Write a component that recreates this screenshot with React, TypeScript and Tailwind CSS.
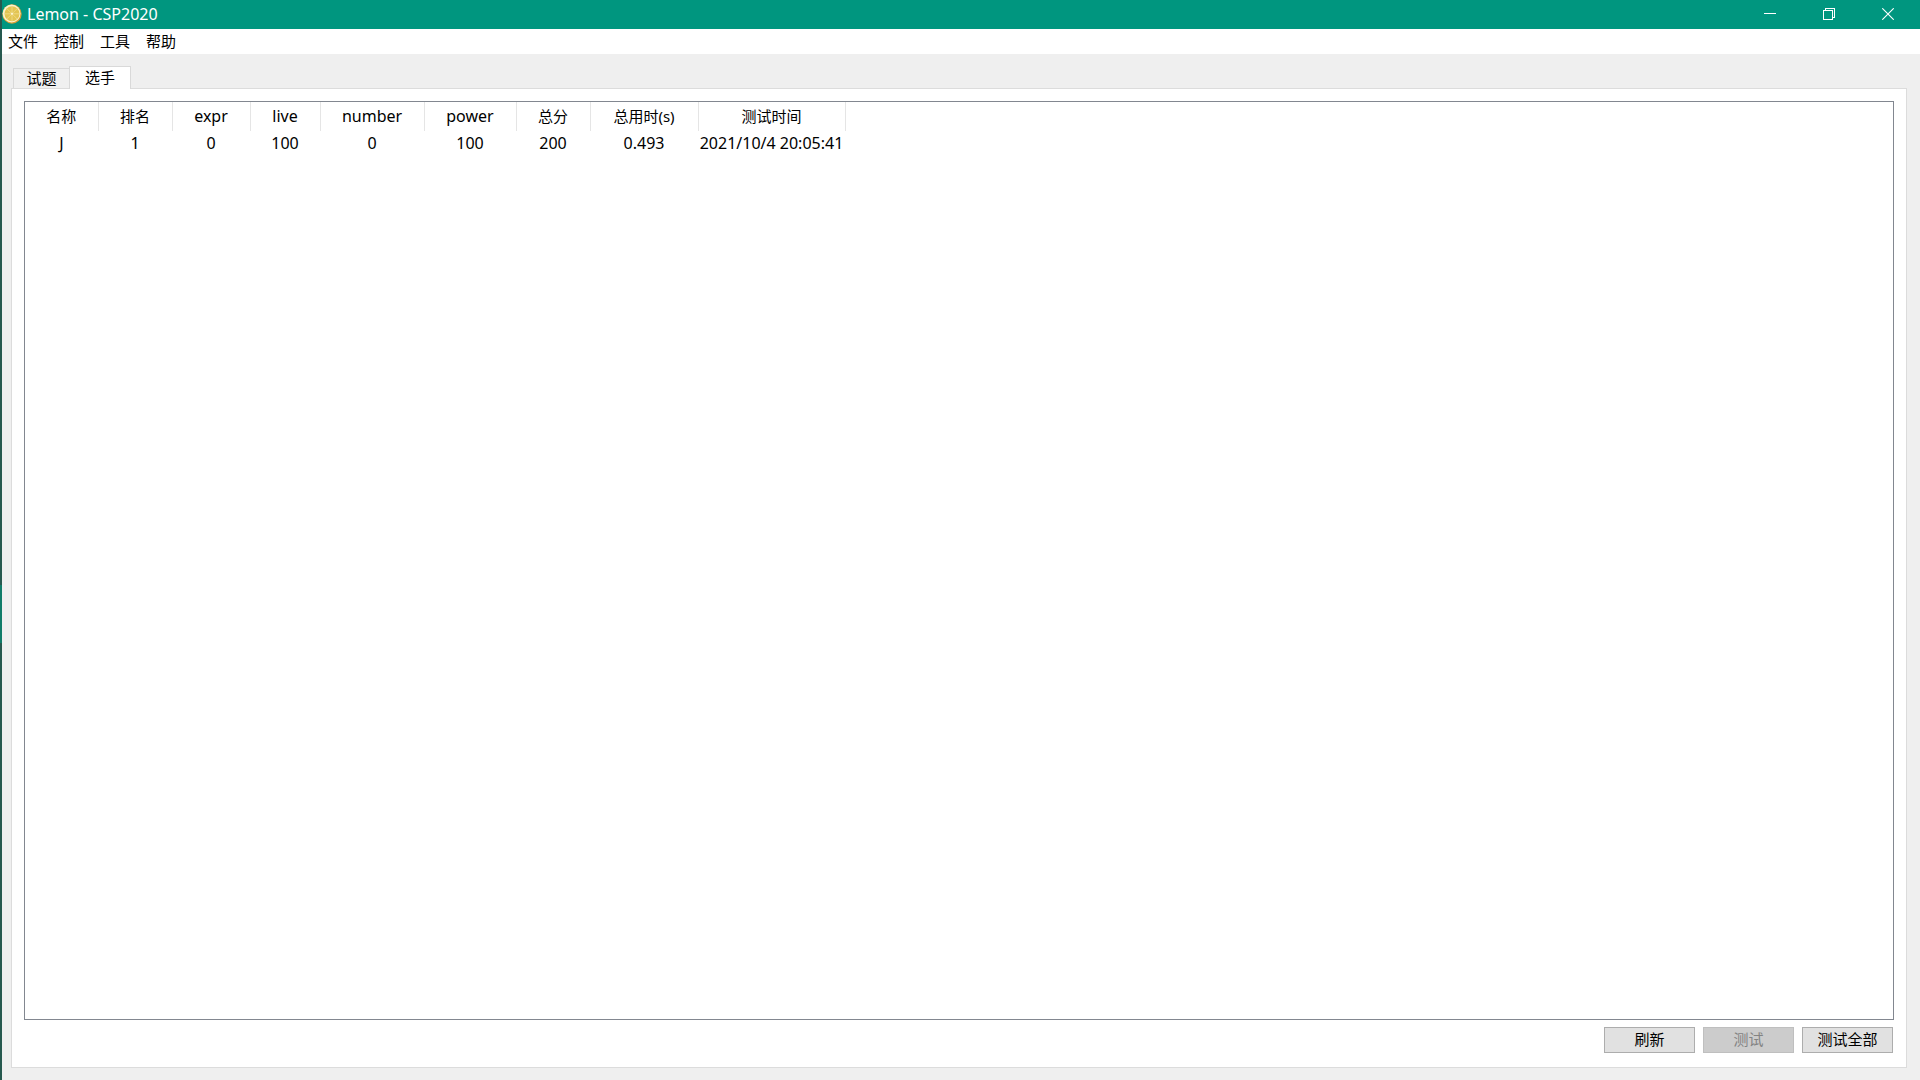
import clsx from "clsx";

const menus = ["文件", "控制", "工具", "帮助"];

const columns = [
    { title: "名称", value: "J", width: "w-[73px]" },
    { title: "排名", value: "1", width: "w-[74px]" },
    { title: "expr", value: "0", width: "w-[78px]", latin: true },
    { title: "live", value: "100", width: "w-[70px]", latin: true },
    { title: "number", value: "0", width: "w-[104px]", latin: true },
    { title: "power", value: "100", width: "w-[92px]", latin: true },
    { title: "总分", value: "200", width: "w-[74px]" },
    { title: "总用时(s)", value: "0.493", width: "w-[108px]" },
    { title: "测试时间", value: "2021/10/4 20:05:41", width: "w-[147px]" },
];

const actions = [
    { label: "刷新" },
    { label: "测试", disabled: true },
    { label: "测试全部" },
];

const LemonIcon = () => (
    <svg viewBox="0 0 20 20" className="size-5" aria-hidden="true">
        <circle cx="10" cy="10" r="9.7" fill="#d9a036" />
        <circle cx="9.6" cy="9.5" r="8.9" fill="#fbf3cf" />
        <circle cx="10" cy="9.8" r="7.5" fill="#e3c552" />
        <path
            d="M10 2.3V17.3M2.5 9.8H17.5M4.7 4.5L15.3 15.1M15.3 4.5L4.7 15.1"
            stroke="#f3e3a0"
            strokeWidth="0.6"
        />
        <circle cx="10" cy="9.8" r="1" fill="#fdf6d8" />
    </svg>
);

const TitleBar = () => (
    <header className="flex h-[29px] items-center bg-[#00967f] pr-[3px] pb-px text-white">
        <LemonIcon />
        <h1 className="ml-[5px] text-[16px] leading-5">Lemon - CSP2020</h1>
        <div className="ml-auto flex h-full">
            <button aria-label="最小化" className="flex w-[59px] items-center justify-center">
                <svg viewBox="0 0 12 12" className="size-3" stroke="white" shapeRendering="crispEdges">
                    <path d="M0 5.5H12" />
                </svg>
            </button>
            <button aria-label="还原" className="flex w-[59px] items-center justify-center">
                <svg viewBox="0 0 12 12" className="size-3" fill="none" stroke="white" shapeRendering="crispEdges">
                    <path d="M0.5 2.5H9.5V11.5H0.5ZM2.5 2V0.5H11.5V9.5H10" />
                </svg>
            </button>
            <button aria-label="关闭" className="flex w-[59px] items-center justify-center">
                <svg viewBox="0 0 12 12" className="size-3" stroke="white" strokeWidth="1.1">
                    <path d="M0.3 0.3L11.7 11.7M11.7 0.3L0.3 11.7" />
                </svg>
            </button>
        </div>
    </header>
);

const ResultTable = () => (
    <div className="flex-1 border border-[#828790]">
        <table className="table-fixed border-collapse text-center">
            <thead>
                <tr className="h-[29px]">
                    {columns.map(col => (
                        <th
                            key={col.title}
                            className={clsx(
                                "border-r border-[#e5e5e5] px-0 pt-0 pb-[2px] font-normal leading-5",
                                col.latin ? "text-[16px]" : "text-[15px]",
                                col.width
                            )}
                        >
                            {col.title}
                        </th>
                    ))}
                </tr>
            </thead>
            <tbody>
                <tr className="h-[25px]">
                    {columns.map(col => (
                        <td key={col.title} className="whitespace-nowrap px-0 pt-0 pb-[2px] text-[16px] leading-5">
                            {col.value}
                        </td>
                    ))}
                </tr>
            </tbody>
        </table>
    </div>
);

export default function App() {
    return (
        <div className="flex h-screen bg-[#efefef] font-['Noto_Sans','Noto_Sans_CJK_SC',sans-serif] text-[15px] text-black">
            {/* sliver of the desktop behind the window */}
            <div className="flex w-[2px] flex-col">
                <div className="flex-[585] bg-[#27594f]" />
                <div className="flex-[58] bg-[#107c69]" />
                <div className="flex-[437] bg-[#27594f]" />
            </div>
            <div className="flex min-w-0 flex-1 flex-col">
                <TitleBar />
                <nav className="flex h-[25px] items-center gap-4 bg-white px-[6px] pb-[2px]">
                    {menus.map(name => (
                        <button key={name} className="leading-5">{name}</button>
                    ))}
                </nav>
                <main className="flex flex-1 flex-col pt-3 pr-[13px] pb-3 pl-[9px]">
                    <div role="tablist" className="-mb-px flex items-end pl-[2px]">
                        <button
                            role="tab"
                            aria-selected="false"
                            className="h-[21px] w-[56px] border border-r-0 border-[#d9d9d9] bg-[#f0f0f0] pb-[2px] leading-4"
                        >
                            试题
                        </button>
                        <button
                            role="tab"
                            aria-selected="true"
                            className="z-10 h-[23px] w-[62px] border border-b-0 border-[#d9d9d9] bg-white pb-[2px] leading-4"
                        >
                            选手
                        </button>
                    </div>
                    <section className="flex flex-1 flex-col gap-[7px] border border-[#dcdcdc] bg-white px-3 pt-3 pb-[14px]">
                        <ResultTable />
                        <div className="flex justify-end gap-2 pr-px">
                            {actions.map(action => (
                                <button
                                    key={action.label}
                                    disabled={action.disabled}
                                    className="h-[26px] w-[91px] border border-[#adadad] bg-[#e1e1e1] pb-[2px] leading-5 disabled:border-[#bfbfbf] disabled:bg-[#cccccc] disabled:text-[#838383]"
                                >
                                    {action.label}
                                </button>
                            ))}
                        </div>
                    </section>
                </main>
            </div>
        </div>
    );
}
